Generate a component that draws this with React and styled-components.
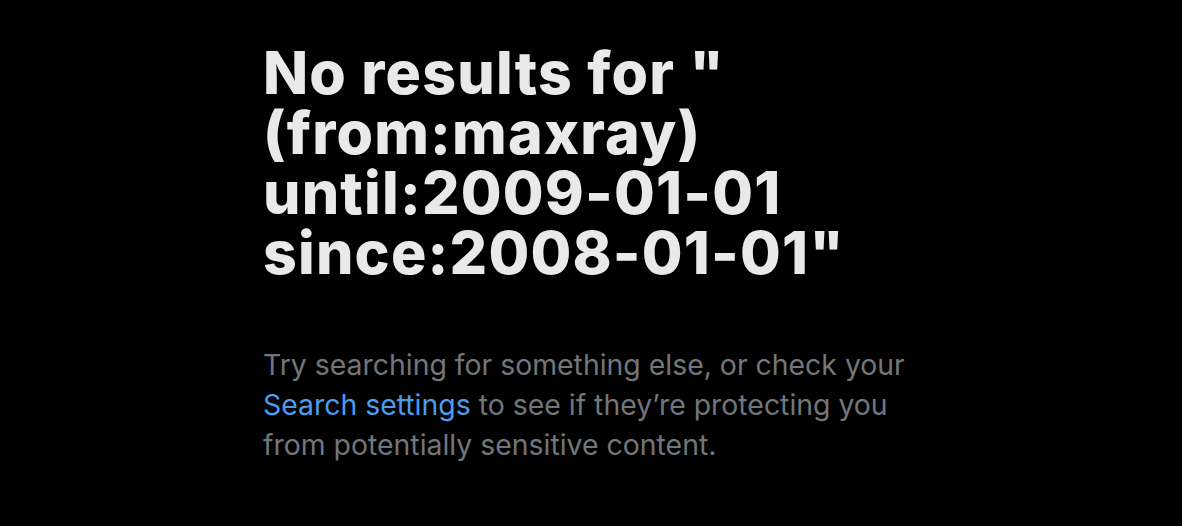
import styled, { createGlobalStyle } from "styled-components";

const GlobalStyle = createGlobalStyle`
  html, body {
    margin: 0;
    padding: 0;
    background: #000;
  }
`;

const Page = styled.div`
  width: 1182px;
  height: 526px;
  background: #000;
  box-sizing: border-box;
  padding: 43px 0 0 263px;
  overflow: hidden;
`;

const EmptyState = styled.div`
  width: 680px;
  display: flex;
  flex-direction: column;
  gap: 62px;
`;

const Title = styled.h1`
  margin: 0;
  font-family: Inter, "Liberation Sans", sans-serif;
  font-weight: 800;
  font-size: 59px;
  line-height: 60px;
  letter-spacing: 1.2px;
  color: #e7e9ea;
  word-break: break-word;
`;

const Message = styled.p`
  margin: 0;
  font-family: Inter, "Liberation Sans", sans-serif;
  font-weight: 400;
  font-size: 28.4px;
  line-height: 40px;
  color: #71767b;
`;

const Link = styled.a`
  color: #4a9eed;
  text-decoration: none;
  cursor: pointer;
`;

const App = () => {
  return (
    <Page>
      <GlobalStyle />
      <EmptyState>
        <Title>No results for "(from:maxray) until:2009-01-01 since:2008-01-01"</Title>
        <Message>
          Try searching for something else, or check your <Link>Search settings</Link> to
          see if they’re protecting you from potentially sensitive content.
        </Message>
      </EmptyState>
    </Page>
  );
};

export default App;
